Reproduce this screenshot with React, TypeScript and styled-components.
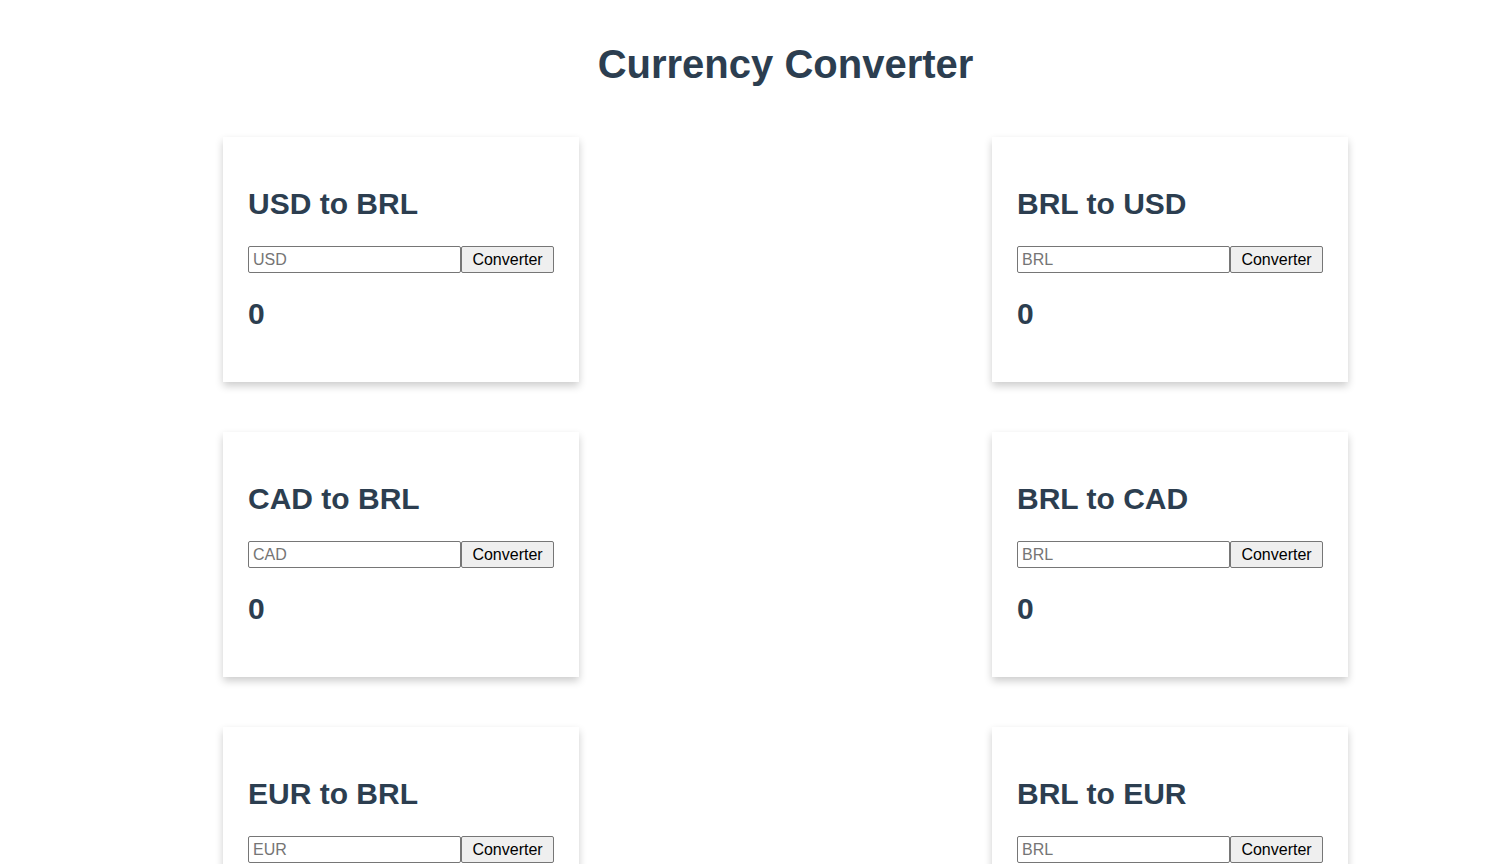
import React, { useState } from "react";
import styled, { createGlobalStyle } from "styled-components";

const GlobalStyle = createGlobalStyle`
  html, body {
    margin: 0;
    padding: 0;
    background: #ffffff;
  }
  body {
    font-family: "Liberation Sans", Arial, Helvetica, sans-serif;
    color: #2c3e50;
    -webkit-font-smoothing: antialiased;
  }
`;

const Page = styled.div`
  padding-top: 41px;
  width: 1125px;
  margin-left: 223px;
`;

const Title = styled.h1`
  margin: 0 0 50px;
  font-size: 40px;
  line-height: 46px;
  font-weight: 700;
  text-align: center;
  color: #2c3e50;
`;

const Grid = styled.div`
  display: grid;
  grid-template-columns: 356px 356px;
  justify-content: space-between;
  row-gap: 50px;
`;

const Card = styled.div`
  box-sizing: border-box;
  height: 245px;
  padding: 25px 25px 26px;
  background: #ffffff;
  box-shadow: 0 4px 8px 0 rgba(0, 0, 0, 0.2);
`;

const CardTitle = styled.h2`
  margin: 25px 0;
  font-size: 30px;
  line-height: 34px;
  font-weight: 700;
  color: #2c3e50;
`;

const Form = styled.div`
  display: flex;
  align-items: stretch;
  height: 27px;
`;

const Input = styled.input`
  box-sizing: border-box;
  width: 213px;
  height: 27px;
  margin: 0;
  padding: 0 4px;
  border: 1px solid #767676;
  border-radius: 2px;
  font-family: "Liberation Sans", Arial, sans-serif;
  font-size: 16px;
  color: #000;
  background: #fff;
  outline: none;
  &::placeholder {
    color: #757575;
  }
`;

const Button = styled.button`
  box-sizing: border-box;
  min-width: 93px;
  height: 27px;
  margin: 0;
  padding: 0 10px;
  border: 1px solid #767676;
  border-radius: 2px;
  background: #efefef;
  font-family: "Liberation Sans", Arial, sans-serif;
  font-size: 16px;
  color: #000;
  cursor: pointer;
`;

const Result = styled.h2`
  margin: 24px 0 25px;
  font-size: 30px;
  line-height: 34px;
  font-weight: 700;
  color: #2c3e50;
`;

type Pair = { from: string; to: string; rate: number };

const pairs: Pair[] = [
  { from: "USD", to: "BRL", rate: 5.0 },
  { from: "BRL", to: "USD", rate: 0.2 },
  { from: "CAD", to: "BRL", rate: 3.7 },
  { from: "BRL", to: "CAD", rate: 0.27 },
  { from: "EUR", to: "BRL", rate: 5.4 },
  { from: "BRL", to: "EUR", rate: 0.185 },
];

function Converter({ pair }: { pair: Pair }) {
  const [value, setValue] = useState("");
  const [result, setResult] = useState<number>(0);
  const convert = () => {
    const n = parseFloat(value.replace(",", "."));
    setResult(isNaN(n) ? 0 : Math.round(n * pair.rate * 100) / 100);
  };
  return (
    <Card>
      <CardTitle>
        {pair.from} to {pair.to}
      </CardTitle>
      <Form>
        <Input
          type="text"
          placeholder={pair.from}
          value={value}
          onChange={(e) => setValue(e.target.value)}
        />
        <Button type="button" onClick={convert}>
          Converter
        </Button>
      </Form>
      <Result>{result}</Result>
    </Card>
  );
}

export default function App() {
  return (
    <>
      <GlobalStyle />
      <Page>
        <Title>Currency Converter</Title>
        <Grid>
          {pairs.map((p) => (
            <Converter key={p.from + p.to} pair={p} />
          ))}
        </Grid>
      </Page>
    </>
  );
}
